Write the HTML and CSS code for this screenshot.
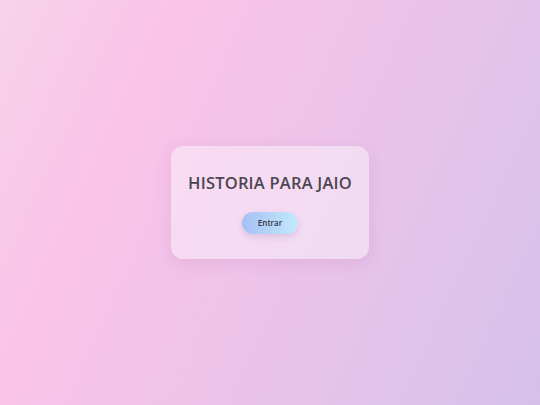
FILE: index.html
```html
<!DOCTYPE html>
<html lang="pt-BR">
<head>
    <meta charset="UTF-8">
    <meta name="viewport" content="width=device-width, initial-scale=1.0">
    <title>Historia para Jaio</title>
    <link rel="stylesheet" href="styles.css">
</head>
<body>
    <div class="card">
        <h1>HISTORIA PARA JAIO</h1>
        <button type="button" class="btn-entrar">Entrar</button>
    </div>
</body>
</html>
```

FILE: styles.css
```css
html, body {
    height: 100%;
}

body {
    margin: 0;
    font-family: "Open Sans", "Noto Sans", sans-serif;
    background: linear-gradient(115deg, #f6d3e8 0%, #fac3e9 25%, #ecc3ea 55%, #d6c1ea 100%);
    display: flex;
    align-items: center;
    justify-content: center;
}

.card {
    width: 198px;
    box-sizing: border-box;
    padding: 23px 10px 25px;
    background: rgba(255, 255, 255, 0.4);
    border-radius: 12px;
    box-shadow: 0 4px 16px rgba(160, 90, 150, 0.15);
    text-align: center;
}

h1 {
    margin: 0 0 16px;
    font-size: 16.5px;
    font-weight: 600;
    letter-spacing: 0.2px;
    line-height: 27px;
    color: #4b4650;
}

.btn-entrar {
    display: block;
    margin: 0 auto;
    width: 56px;
    height: 22px;
    padding: 0 0 1px;
    border: none;
    border-radius: 11px;
    background: linear-gradient(90deg, #a6c1f5, #c2e9fb);
    box-shadow: 0 3px 6px rgba(120, 100, 160, 0.2);
    font-family: "Open Sans", "Noto Sans", sans-serif;
    font-size: 8px;
    font-weight: 600;
    color: #353545;
    cursor: pointer;
}
```
